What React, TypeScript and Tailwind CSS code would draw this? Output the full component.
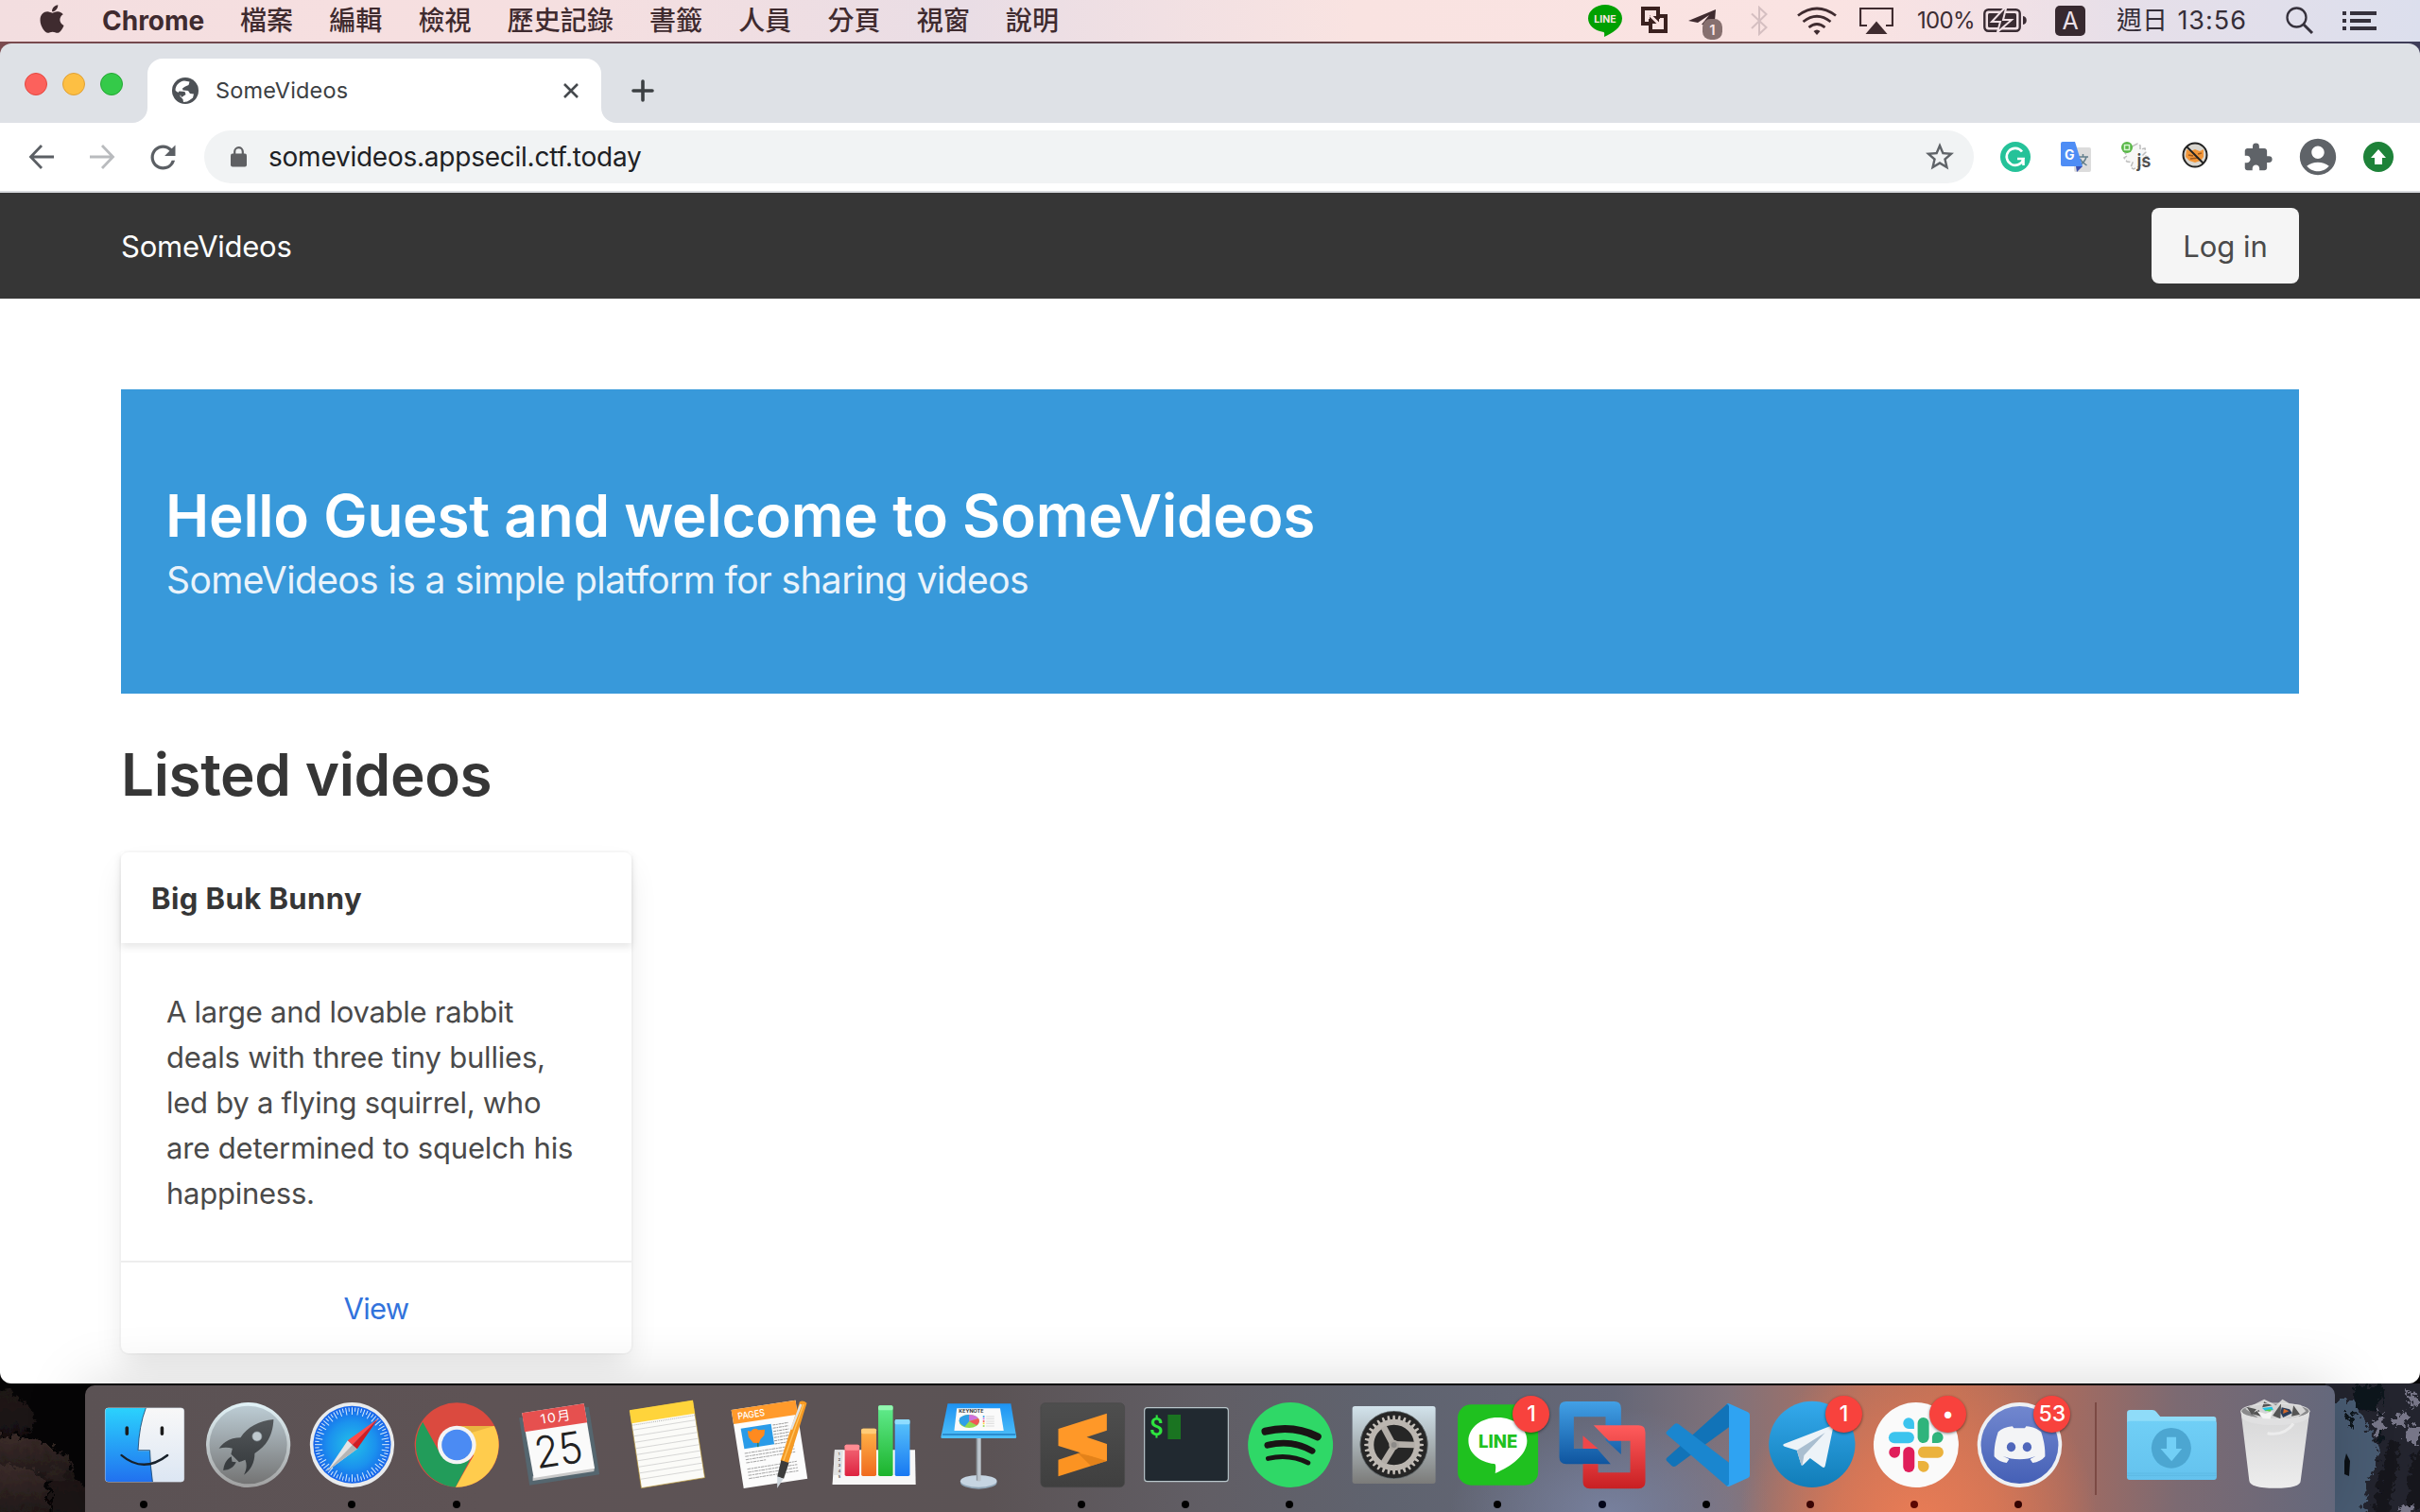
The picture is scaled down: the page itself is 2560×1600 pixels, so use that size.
import { type ReactNode } from "react";
import { FaApple } from "react-icons/fa";
import { MdStarBorder, MdExtension, MdAccountCircle, MdRefresh } from "react-icons/md";

const MENUS = ["檔案", "編輯", "檢視", "歷史記錄", "書籤", "人員", "分頁", "視窗", "說明"];

function MenuBar() {
  return (
    <header className="flex h-[44px] shrink-0 items-center bg-[linear-gradient(90deg,#f3dee0_0%,#f6dfe0_14%,#f5dfe0_24%,#e9dde5_40%,#f9e3e1_56%,#fae3e2_76%,#f3e1e5_82%,#e6dfe9_88%,#dcdfed_100%)] pl-[40px] text-[28px] leading-[44px] text-[#3f2b2f]">
      <FaApple className="h-[34px] w-[30px] -translate-y-[2px]" />
      <span className="ml-[38px] w-[108px] text-[28px] font-bold whitespace-nowrap">Chrome</span>
      <nav className="ml-[38px] flex gap-[38px] font-medium tracking-[0.1px]">
        {MENUS.map((m) => (
          <span key={m}>{m}</span>
        ))}
      </nav>
      <div className="ml-auto flex h-[44px] items-center text-[#3c2c32]">
        <svg width="36" height="36" viewBox="0 0 36 36" className="mr-[20px]">
          <path d="M18 1C8 1 0 7.500 0 15.500c0 7 6.500 13 15.500 14.200 1.800.3 1.900 1 1.500 5.300C25 31.500 36 25 36 15.500 36 7.500 28 1 18 1z" fill="#00a000" />
          <text x="18" y="20" textAnchor="middle" fontSize="10.500" fontWeight="700" fill="#fbe6e4" fontFamily="Inter">LINE</text>
        </svg>
        <svg width="28" height="30" viewBox="0 0 28 30" className="mr-[22px]" fill="none" stroke="#3a211f" strokeWidth="4">
          <path d="M18 13V2H2v16h8M18 10h8v16H10V13" />
          <path d="M7 7l14 14" stroke="#fae3e2" strokeWidth="4.500" />
          <path d="M9 9v9h9zM19 10v8l-8-8z" fill="#3a211f" stroke="none" />
          <path d="M10 9.500l9 9" stroke="#fae3e2" strokeWidth="3" />
        </svg>
        <svg width="36" height="34" viewBox="0 0 36 34" className="mr-[30px] translate-y-[4px]">
          <path d="M0 13L29 1l-1.500 18L14 17l8-10L10 15z" fill="#3f2b2f" />
          <rect x="15" y="11" width="21" height="22" rx="8.500" fill="#87706f" />
          <text x="25.300" y="27.500" textAnchor="middle" fontSize="15" fontWeight="600" fill="#fbe6e4" fontFamily="Inter">1</text>
        </svg>
        <svg width="18" height="32" viewBox="0 0 18 32" className="mr-[31px]" fill="none" stroke="#d5bfc1" strokeWidth="2">
          <path d="M1 8.500L16.500 23 9 30V2l7.500 7L1 24" />
        </svg>
        <svg width="42" height="30" viewBox="0 0 42 30" className="mr-[24px]" fill="none" stroke="#3f2b2f" strokeWidth="2.800">
          <path d="M1 9.500Q21-5.500 41 9.500M6.500 16q14.500-11.500 29 0M12.500 22q8.500-7 17 0" />
          <path d="M17.500 26q3.500-3 7 0L21 30z" fill="#3f2b2f" stroke="none" />
        </svg>
        <svg width="36" height="30" viewBox="0 0 36 30" className="mr-[25px]">
          <path d="M8 20H1V2h34v18h-7" fill="none" stroke="#3f2b2f" strokeWidth="2.200" />
          <path d="M18 15.500L29.500 29h-23z" fill="#3f2b2f" />
        </svg>
        <span className="w-[60px] text-[24px] font-normal whitespace-nowrap tracking-[-0.680px]">100%</span>
        <svg width="47" height="26" viewBox="0 0 47 26" className="ml-[10px]">
          <rect x="1.300" y="1.300" width="37.400" height="22.400" rx="4" fill="none" stroke="#3a2c33" strokeWidth="2.400" />
          <rect x="5" y="5" width="30" height="15" rx="1.500" fill="#3a2c33" />
          <path d="M42 8c5 0 5 9 0 9z" fill="#3a2c33" />
          <path d="M22 0L9 14h9l-3 11 15-13h-9l3-12z" fill="#3a2c33" stroke="#f0e0e5" strokeWidth="2" />
        </svg>
        <span className="ml-[29px] flex h-[32px] w-[32px] items-center justify-center rounded-[5px] bg-[#372930] text-[25px] text-[#ece0e8]">A</span>
        <span className="ml-[33px] flex w-[137px] justify-between whitespace-nowrap text-[27px] text-[#352e38]"><span>週日</span><span className="-mr-px tracking-[1px]">13:56</span></span>
        <svg width="30" height="30" viewBox="0 0 30 30" className="ml-[42px]" fill="none" stroke="#35313c" strokeWidth="2.300">
          <circle cx="11.500" cy="11.500" r="10" /><path d="M18.500 18.500L28 28" strokeWidth="3" />
        </svg>
        <svg width="36" height="20" viewBox="0 0 36 20" className="mr-[46px] ml-[30px]" fill="#35313c">
          <path d="M0 0h4v4H0zM8 0h28v4H8zM0 8h4v4H0zM8 8h22v4H8zM0 16h4v4H0zM8 16h28v4H8z" />
        </svg>
      </div>
    </header>
  );
}

function TabStrip() {
  return (
    <div className="flex h-[84px] items-end bg-[#dee1e6]">
      <div className="mb-[29px] ml-[26px] flex gap-[16px]">
        <i className="size-[24px] rounded-full border border-[#e5473f] bg-[#fc615c]" />
        <i className="size-[24px] rounded-full border border-[#dfa035] bg-[#fdbf43]" />
        <i className="size-[24px] rounded-full border border-[#25a834] bg-[#34ca49]" />
      </div>
      <svg width="16" height="16" className="ml-[10px]" viewBox="0 0 16 16"><path d="M16 0v16H0A16 16 0 0 0 16 0z" fill="#fff" /></svg>
      <div className="flex h-[68px] w-[480px] items-center rounded-t-[16px] bg-white pl-[26px]">
        <svg width="28" height="28" viewBox="0 0 28 28">
          <circle cx="14" cy="14" r="14" fill="#4d5156" />
          <path d="M3.500 13.500C3.500 8 8 4 13 3.500l5.500 1-1 3.500-3.500 1.500-3 2 .5 2 5.500.5 2 3 4 .5-1 4-3.500 2.500-2.500 1.500-4 .5-.5-3-3-3 .5-3-4-2z" fill="#fff" />
          <path d="M7.500 14.500l6 .5 1 3-4.500 3-1-2.500-3-1.500z" fill="#4d5156" />
        </svg>
        <span className="ml-[18px] text-[23.500px] tracking-[0.150px] whitespace-nowrap text-[#3c4043]">SomeVideos</span>
        <svg width="16" height="16" viewBox="0 0 16 16" className="mr-[24px] ml-auto" stroke="#45494d" strokeWidth="2.600"><path d="M1 1l14 14M15 1L1 15" /></svg>
      </div>
      <svg width="16" height="16" viewBox="0 0 16 16"><path d="M0 0v16h16A16 16 0 0 1 0 0z" fill="#fff" /></svg>
      <svg width="24" height="24" viewBox="0 0 24 24" className="mb-[22px] ml-[16px]" stroke="#3c4043" strokeWidth="3.600" strokeLinecap="round"><path d="M12 2v20M2 12h20" /></svg>
    </div>
  );
}

function Toolbar() {
  return (
    <div className="flex h-[74px] items-center border-b-2 border-[#d9dbde] bg-white">
      <svg width="28" height="28" viewBox="0 0 28 28" className="ml-[30px]" fill="none" stroke="#5b5f64" strokeWidth="2.800"><path d="M14 2L2.500 14 14 26M2.500 14H27" /></svg>
      <svg width="28" height="28" viewBox="0 0 28 28" className="ml-[36px]" fill="none" stroke="#b9bbbe" strokeWidth="2.800"><path d="M14 2l11.500 12L14 26M25.500 14H1" /></svg>
      <MdRefresh className="ml-[31px] size-[39px] text-[#5b5f64]" />
      <div className="ml-[24px] flex h-[56px] w-[1872px] items-center rounded-full bg-[#f1f3f4] pr-[18px] pl-[28px]">
        <svg width="17" height="22" viewBox="0 0 17 22"><path d="M4.200 9V5.500a4.300 4.300 0 0 1 8.600 0V9" fill="none" stroke="#5f6063" strokeWidth="2.200" /><rect y="7.500" width="17" height="14" rx="2" fill="#5f6063" /></svg>
        <span className="ml-[23px] text-[28px] tracking-[-0.240px] whitespace-nowrap text-[#202124]">somevideos.appsecil.ctf.today</span>
        <MdStarBorder className="ml-auto size-[36px] text-[#5f6368]" />
      </div>
      <svg width="32" height="32" viewBox="0 0 32 32" className="ml-[28px]">
        <circle cx="16" cy="16" r="16" fill="#25c299" />
        <path d="M23 10.500A9 9 0 1 0 24.500 18H18M24.500 17v8" fill="none" stroke="#fff" strokeWidth="2.600" />
      </svg>
      <svg width="32" height="32" viewBox="0 0 32 32" className="ml-[32px]">
        <rect x="14" y="6" width="18" height="26" rx="2" fill="#dcdcdc" />
        <path d="M18 16h11M23.500 13v3M27 16c-1 4-4 7-7 9M20.500 18c1 3 4 5 7 7" stroke="#607d8b" strokeWidth="1.500" fill="none" />
        <path d="M16 26h7l-6 6z" fill="#3a4fb0" />
        <path d="M2 0h13l8 26H2a2 2 0 0 1-2-2V2a2 2 0 0 1 2-2z" fill="#4e8df5" />
        <text x="4" y="18.500" fontSize="14" fontWeight="700" fill="#fff" fontFamily="Inter">G</text>
      </svg>
      <svg width="34" height="34" viewBox="0 -1 34 34" className="-mr-[2px] ml-[32px] overflow-visible">
        <path d="M13 4l4-2 3 2v4l5-1 1 4-3 3 5 2-1 3-8 7-6 3-3-2 2-5-6-1-3-4 3-2-3-5 5-1z" fill="#f7f7f7" stroke="#bdbdbd" strokeWidth="1.500" strokeDasharray="5 2" />
        <circle cx="6" cy="6" r="6" fill="#58b747" /><rect x="3.500" y="3.500" width="5" height="5" fill="none" stroke="#d9f5d4" strokeWidth="1.500" />
        <text x="16.500" y="27" fontSize="20" fontWeight="600" fill="#4d4d4d" fontFamily="Inter" textLength="15" lengthAdjust="spacingAndGlyphs">js</text>
      </svg>
      <svg width="28" height="28" viewBox="0 0 28 28" className="mb-[4px] ml-[32px]">
        <circle cx="14" cy="14" r="12.500" fill="#d9d6cf" />
        <path d="M5 8l4 2 5-2 5 2 4-2v8l-3 4-6 2-6-2-4-4z" fill="#f29638" /><path d="M7 14l5 1M17 13l4-1M9 18l9-1" stroke="#a1591d" strokeWidth="1.500" />
        <circle cx="14" cy="14" r="12.500" fill="none" stroke="#222" strokeWidth="2" /><path d="M5 5l18 18" stroke="#222" strokeWidth="2" />
      </svg>
      <MdExtension className="ml-[36px] size-[33px] text-[#5f6368]" />
      <MdAccountCircle className="ml-[24px] size-[46px] text-[#5f6368]" />
      <svg width="32" height="32" viewBox="0 0 32 32" className="ml-[25px]"><circle cx="16" cy="16" r="16" fill="#1e8239" /><path d="M16 8l8 9h-4v7h-8v-7H8z" fill="#fff" /></svg>
    </div>
  );
}

function Page() {
  return (
    <main className="flex-1 bg-white">
      <div className="flex h-[112px] items-center justify-between bg-[#363636] px-[128px]">
        <span className="pt-[2px] text-[31px] tracking-[-0.250px] whitespace-nowrap text-white">SomeVideos</span>
        <button className="h-[80px] w-[156px] rounded-[8px] bg-[#f5f5f5] pt-[2px] text-[31px] whitespace-nowrap text-[#4a4a4a]">Log in</button>
      </div>
      <div className="px-[128px] pt-[96px]">
        <section className="h-[322px] bg-[#3899da] px-[48px] pt-[98px]">
          <h1 className="-ml-px text-[62px] leading-[72px] font-semibold tracking-[-0.250px] whitespace-nowrap text-white">Hello Guest and welcome to SomeVideos</h1>
          <p className="text-[39px] leading-[64px] tracking-[-0.620px] whitespace-nowrap text-[#e9f3fb]">SomeVideos is a simple platform for sharing videos</p>
        </section>
        <h2 className="mt-[48px] h-[72px] text-[62px] leading-[76px] font-semibold tracking-[-0.400px] whitespace-nowrap text-[#363636]">Listed videos</h2>
        <article className="mt-[48px] w-[540px] rounded-[8px] bg-white text-[31px] leading-[48px] text-[#4a4a4a] shadow-[0_16px_32px_-4px_rgba(10,10,10,0.1),0_0_0_2px_rgba(10,10,10,0.02)]">
          <h3 className="h-[96px] px-[32px] pt-[25px] font-bold tracking-[0.430px] text-[#363636] shadow-[0_4px_8px_rgba(10,10,10,0.1)]">Big Buk Bunny</h3>
          <div className="h-[336px] px-[48px] pt-[49px] tracking-[-0.200px] whitespace-nowrap">
            <span className="tracking-[-0.250px]">A large and lovable rabbit</span><br />
            deals with three tiny bullies,<br />
            <span className="tracking-[-0.270px]">led by a flying squirrel, who</span><br />
            <span className="tracking-[-0.150px]">are determined to squelch his</span><br />
            <span className="tracking-[-0.250px]">happiness.</span>
          </div>
          <div className="flex h-[98px] items-center justify-center border-t-2 border-[#ededed] pt-[2px] text-[#3273dc]"><span className="tracking-[-0.700px]">View</span></div>
        </article>
      </div>
    </main>
  );
}

function DockIcon({ vb, dot, badge, children }: { vb: string; dot?: string; badge?: string; children: ReactNode }) {
  return (
    <div className="relative h-[134px] w-[110.200px] shrink-0">
      <svg width="110.200" height="134" viewBox={vb} preserveAspectRatio="none" className="overflow-visible">{children}</svg>
      {dot && <i className={`absolute top-[122px] left-[50px] size-[8px] rounded-full ${dot}`} />}
      {badge && (
        <span className="absolute top-[11px] left-[70px] flex size-[39px] items-center justify-center rounded-full bg-[#f8423d] text-[23px] font-medium text-white shadow-[0_1px_3px_rgba(0,0,0,0.5)]">{badge}</span>
      )}
    </div>
  );
}

function Grad({ id, from, to }: { id: string; from: string; to: string }) {
  return <linearGradient id={id} x1="0" y1="0" x2="0" y2="1"><stop offset="0" stopColor={from} /><stop offset="1" stopColor={to} /></linearGradient>;
}

const TICKS = Array.from({ length: 72 }, (_, i) => i * 5);
const TEETH = Array.from({ length: 32 }, (_, i) => i * 11.25);
const RULES = Array.from({ length: 11 }, (_, i) => i);

function Dock() {
  return (
    <div className="ml-[90px] flex h-[134px] w-[2380px] rounded-t-[10px] bg-[radial-gradient(ellipse_190px_190px_at_1939px_150px,#ea7c55_0%,rgba(222,120,85,0.800)_45%,rgba(190,115,95,0)_100%),radial-gradient(ellipse_170px_110px_at_1614px_134px,#77809d_0%,rgba(119,128,157,0)_100%),linear-gradient(90deg,#5b5254_0%,#5e5355_18%,#5b5355_40%,#615e65_50%,#5f636f_58%,#656777_68%,#80727a_73%,#b06f5e_79%,#bd7056_83%,#a56b60_88%,#7c6a72_93%,#64687c_100%)] pl-[8px] shadow-[0_0_64px_rgba(0,0,0,0.170)]">
      <DockIcon vb="274.4 78 308.600 402" dot="bg-black">
        <defs><Grad id="fi" from="#2bd2fd" to="#2171ef" /><Grad id="fw" from="#f8f8f8" to="#dce6f3" /></defs>
        <rect x="312" y="150" width="233" height="234" rx="9" fill="url(#fw)" stroke="#dfe9f3" strokeWidth="2" />
        <path d="M432 150H321q-9 0-9 9v216q0 9 9 9h131q-6-50-8-98h-35q3-80 23-136z" fill="url(#fi)" />
        <path d="M432 150q-20 56-23 134h35q1 50 8 100" fill="none" stroke="#1c4a72" strokeWidth="2.500" />
        <path d="M376 213v19M480 213v19" stroke="#1b1b1b" strokeWidth="10" strokeLinecap="round" />
        <path d="M360 300q65 59 136 0" fill="none" stroke="#17212b" strokeWidth="7" strokeLinecap="round" />
      </DockIcon>
      <DockIcon vb="583 78 308.600 402">
        <defs><Grad id="lr" from="#e2f3f8" to="#a0a0a0" /><Grad id="lb" from="#bcccd4" to="#747474" /><Grad id="lk" from="#54585b" to="#33373a" /></defs>
        <ellipse cx="736" cy="267" rx="125" ry="135" fill="url(#lr)" /><ellipse cx="736" cy="267" rx="115" ry="124" fill="url(#lb)" />
        <path d="M811 186c-42 4-78 24-98 58-24 0-48 10-64 34 14-4 28-4 40 0l-4 18 24 26 18-8c6 16 4 32-4 48 20-14 32-38 32-68 38-26 54-60 56-108z" fill="url(#lk)" />
        <path d="M686 304c-16 10-22 26-24 44 18-2 30-8 38-26l-12-2z" fill="#383c3f" />
        <ellipse cx="762" cy="240" rx="14" ry="15" fill="#bfc9ce" stroke="#8b959b" strokeWidth="2" />
      </DockIcon>
      <DockIcon vb="891.5 78 308.600 402" dot="bg-black">
        <defs><radialGradient id="sf"><stop offset="0" stopColor="#22c1e8" /><stop offset="0.600" stopColor="#1b92ee" /><stop offset="1" stopColor="#1763ea" /></radialGradient></defs>
        <ellipse cx="1044" cy="267" rx="125" ry="135" fill="#e9ebec" /><ellipse cx="1044" cy="266" rx="115" ry="123" fill="url(#sf)" />
        <g transform="translate(1044 266) scale(0.935 1)" stroke="#d8ecfb" strokeWidth="3">
          {TICKS.map((a) => <path key={a} d={a % 10 ? "M0-118V-105" : "M0-118V-95"} transform={`rotate(${a})`} />)}
        </g>
        <path d="M970 350L1031 253l28 27z" fill="#e4e4e4" /><path d="M970 350l75-83 14 13z" fill="#b5b5b5" />
        <path d="M1121 184l-90 69 14 14z" fill="#ff4a4a" /><path d="M1121 184l-76 83 14 13z" fill="#d31c22" />
      </DockIcon>
      <DockIcon vb="1200 78 308.600 402" dot="bg-black">
        <ellipse cx="1352" cy="267" rx="125" ry="134" fill="#db4a3f" />
        <path d="M1352 207H1463A125 134 0 0 1 1348 401L1402 300z" fill="#ffcc4d" />
        <path d="M1251 194A125 134 0 0 0 1348 401L1390 316 1300 290z" fill="#229c5a" />
        <path d="M1352 207h111l-70 22z" fill="#d9a53b" opacity="0.600" />
        <ellipse cx="1352" cy="267" rx="57" ry="61" fill="#f4f4f4" /><ellipse cx="1352" cy="267" rx="45" ry="49" fill="#4b8bf3" />
      </DockIcon>
      <DockIcon vb="-3.5 78 320 402">
        <path d="M26 181l214-35 33 215L58 395z" fill="#55666f" /><path d="M68 381l188-30 2-14-190 30z" fill="#c9c9c9" />
        <path d="M35 166l190-30 33 205-187 31z" fill="#fafafa" /><path d="M35 166l190-30 10 60-192 30z" fill="#e6504f" />
        <g transform="rotate(-9 140 190)" fontFamily="Inter, Noto Sans CJK TC" textAnchor="middle">
          <text x="139" y="193" fontSize="41" fill="#fff" textLength="93">10月</text>
          <text x="132" y="332" fontSize="138" fontWeight="300" fill="#222" textLength="148" lengthAdjust="spacingAndGlyphs">25</text>
        </g>
      </DockIcon>
      <DockIcon vb="316.5 78 320 402">
        <path d="M366 158l194-32 37 245-195 33z" fill="#fbfbf8" stroke="#b08f2c" strokeWidth="2" />
        <path d="M366 157l194-32 6 42-194 32z" fill="#ffd43b" />
        <path d="M373 205l193-32" stroke="#888" strokeWidth="2" strokeDasharray="3 3" />
        {RULES.slice(0, 9).map((i) => <path key={i} d={`M${375 + i * 3} ${220 + i * 19.5}l193-32`} stroke="#bfbfbf" strokeWidth="1.800" />)}
      </DockIcon>
      <DockIcon vb="636.5 78 320 402">
        <path d="M679 156l197-31 37 249-196 31z" fill="#fcfcfc" /><path d="M679 156l197-31 7 45-197 31z" fill="#ff9a2b" />
        <text transform="rotate(-9 700 186)" x="700" y="187" fontSize="30" fontWeight="500" fill="#fff" fontFamily="Inter" textLength="84" lengthAdjust="spacingAndGlyphs">PAGES</text>
        <path d="M708 215l93-15 10 65-92 15z" fill="#2a9be8" />
        <path d="M729 222l10 2 5-6q12-6 18 2l20-2-2 18-12 14-4 12-18-2-14-18z" fill="#ff8a1f" /><path d="M761 260v14" stroke="#2b6e2f" strokeWidth="3" />
        {RULES.slice(0, 7).map((i) => <path key={i} d={`M${806 + i} ${204 + i * 10}l48-8`} stroke="#9a9a9a" strokeWidth="3" strokeDasharray="9 2 5 2" />)}
        {[0, 1, 2, 3, 5, 6, 7, 8].map((i) => <path key={i} d={`M${720 + i * 1.6} ${294 + i * 10}l${i === 3 ? 62 : 152} ${i === 3 ? -10 : -25}`} stroke="#a5a5a5" strokeWidth="3" strokeDasharray="11 2 6 2" />)}
        <path d="M889 130q10-6 22 4l-57 190-24-6z" fill="#f59a23" /><path d="M893 138l-30 80" stroke="#dfe3e6" strokeWidth="7" /><path d="M901 138l-62 180" stroke="#ffc45f" strokeWidth="4" />
        <path d="M832 316l24 8-16 50-20-6z" fill="#3c3c3c" /><path d="M820 367l19 7-19 30z" fill="#ced6dc" />
      </DockIcon>
      <DockIcon vb="956.5 78 320 402">
        <defs><Grad id="n1" from="#f46a78" to="#dd2340" /><Grad id="n2" from="#ffb64a" to="#f06a1e" /><Grad id="n3" from="#62ec8e" to="#1cb32c" /><Grad id="n4" from="#5ac6fb" to="#1878f2" /></defs>
        <path d="M997 283h247l2 110H990z" fill="#f7f7f7" /><path d="M997 283h26l-5 80h-24z" fill="#e2e2e2" />
        {[1, 2, 3, 4, 5].map((n) => <text key={n} x={1008} y={281 + n * 18.500} fontSize="11" fontWeight="700" fill="#555" fontFamily="Inter">{n}</text>)}
        <rect x="1028" y="266" width="45" height="100" rx="5" fill="url(#n1)" /><rect x="1028" y="266" width="45" height="18" rx="5" fill="#ff8c93" />
        <rect x="1079" y="215" width="46" height="151" rx="5" fill="url(#n2)" /><rect x="1079" y="215" width="46" height="17" rx="5" fill="#ffcc77" />
        <rect x="1131" y="142" width="45" height="224" rx="5" fill="url(#n3)" /><rect x="1131" y="142" width="45" height="15" rx="5" fill="#93f7b0" />
        <rect x="1182" y="186" width="46" height="180" rx="5" fill="url(#n4)" /><rect x="1182" y="186" width="46" height="16" rx="5" fill="#8edcff" />
      </DockIcon>
      <DockIcon vb="1276.5 78 320 402">
        <defs><Grad id="ky" from="#1d93f3" to="#4fc0f8" /></defs>
        <ellipse cx="1437" cy="386" rx="56" ry="21" fill="#8ea4b6" /><ellipse cx="1437" cy="382" rx="56" ry="19" fill="#c6d5e2" />
        <path d="M1430 246h14v134q-7 5-14 0z" fill="#bcc5cd" /><path d="M1430 246h4v134h-4z" fill="#8d969e" />
        <path d="M1342 136h194l17 106q0 4-4 4h-224q-4 0-4-4z" fill="url(#ky)" /><path d="M1326 234h224" stroke="#0c5fa8" strokeWidth="3" />
        <path d="M1370 151h133l11 71h-152z" fill="#fafafa" />
        <text x="1376" y="164" fontSize="13" fontWeight="700" fill="#333" textLength="76" lengthAdjust="spacingAndGlyphs" fontFamily="Inter">KEYNOTE</text>
        <ellipse cx="1408" cy="192" rx="31" ry="21" fill="#93d94f" /><path d="M1408 192l-14 17q-24-12-14-28 10-10 28-10z" fill="#2f9fe8" /><path d="M1408 192v-21q20 0 28 12z" fill="#d070dd" /><path d="M1408 192l29-9q6 12-6 22z" fill="#f25555" />
        <path d="M1450 177h5" stroke="#2f9fe8" strokeWidth="5" /><path d="M1450 184h5" stroke="#d070dd" strokeWidth="5" /><path d="M1450 192h5" stroke="#f25555" strokeWidth="5" /><path d="M1450 199h5" stroke="#ffd43b" strokeWidth="5" /><path d="M1450 207h5" stroke="#93d94f" strokeWidth="5" />
        <path d="M1460 177h25M1460 184h25M1460 192h25M1460 199h25M1460 207h25" stroke="#ccc" strokeWidth="2" />
      </DockIcon>
      <DockIcon vb="89.4 78 330.600 402" dot="bg-black">
        <defs><Grad id="su" from="#4e4e4e" to="#3f3f3f" /></defs>
        <rect x="122" y="134" width="266" height="267" rx="14" fill="url(#su)" stroke="#484848" strokeWidth="2" />
        <path d="M178 314l154-50v54l-154 49z" fill="#fb9322" /><path d="M240 293l92 20v5l-50 16z" fill="#d97a17" opacity="0.700" />
        <path d="M332 167v54l-64 21 64 22v54l-154-48v-54z" fill="#ff9828" />
      </DockIcon>
      <DockIcon vb="420 78 330.600 402" dot="bg-black">
        <rect x="452" y="149" width="266" height="234" rx="9" fill="#212930" stroke="#b9c6cb" strokeWidth="3.500" />
        <text x="468" y="237" fontSize="76" fontWeight="500" fill="#2ee53f" fontFamily="Roboto, Inter" textLength="44" lengthAdjust="spacingAndGlyphs">$</text>
        <rect x="526" y="171" width="41" height="78" fill="#1a7421" />
      </DockIcon>
      <DockIcon vb="750.6 78 330.600 402" dot="bg-black">
        <circle cx="916" cy="267" r="135" fill="#2fd867" />
        <g fill="none" stroke="#191414" strokeLinecap="round"><path d="M836 224q88-22 166 17" strokeWidth="24" /><path d="M843 268q76-20 142 18" strokeWidth="20" /><path d="M845 310q68-16 127 14" strokeWidth="15" /></g>
      </DockIcon>
      <DockIcon vb="1081.2 78 330.600 402">
        <defs><Grad id="se" from="#d2e3ec" to="#7b7b79" /></defs>
        <rect x="1113" y="144" width="264" height="246" rx="8" fill="url(#se)" /><circle cx="1245" cy="267" r="108" fill="#262626" /><circle cx="1245" cy="267" r="107" fill="none" stroke="#9aa8b0" strokeWidth="2" opacity="0.700" />
        <g transform="translate(1245 267)" fill="#c6c1bb">
          {TEETH.map((a) => <path key={a} d="M-4.500-80L-3-94H3L4.500-80z" transform={`rotate(${a})`} />)}
          <circle r="73" fill="none" stroke="#bbb6b0" strokeWidth="18" />
          {[0, 120, 240].map((a) => <path key={a} d="M-8-12H0L66-10V10L0 8z" transform={`rotate(${a})`} fill="#b3aea8" />)}
          <circle r="16" fill="#aaa59f" /><circle r="9" fill="#8c8a88" />
        </g>
      </DockIcon>
      <DockIcon vb="-28.2 78 330.600 402" dot="bg-black" badge="1">
        <rect x="8" y="139" width="255" height="256" rx="42" fill="#1fc11f" />
        <path d="M135 180c-52 0-93 32-93 74 0 38 34 68 82 73 6 1 5 12 3 30 50-22 101-58 101-103 0-42-41-74-93-74z" fill="#fff" />
        <text x="74" y="277" fontSize="56" fontWeight="800" fill="#1fc11f" textLength="124" lengthAdjust="spacingAndGlyphs" fontFamily="Inter">LINE</text>
      </DockIcon>
      <DockIcon vb="302.4 78 330.600 402" dot="bg-[#03061a]">
        <defs><Grad id="vb" from="#42a0e6" to="#0f559f" /><Grad id="vr" from="#ff5c5c" to="#c81f22" /></defs>
        <path d="M350 129h152q22 0 22 22v146L475 252v-74H374v101h74l43 49H350q-22 0-22-22V151q0-22 22-22z" fill="url(#vb)" />
        <path d="M437 205h142q22 0 22 22v157q0 22-22 22H425q-22 0-22-22v-56h48v27h102V254h-68z" fill="url(#vr)" />
        <path d="M403 238l48 41h-48z" fill="#f0474a" />
      </DockIcon>
      <DockIcon vb="633 78 330.600 402" dot="bg-black">
        <path d="M669 309l192-172q4-3 8 0v72L700 333q-8 6-15 0l-16-16q-3-4 0-8z" fill="#1173b8" />
        <path d="M669 225l25-24q6-5 13 0l160 122v74q-4 3-8 0L669 233q-3-4 0-8z" fill="#1a86cf" />
        <path d="M867 136l60 27q6 3 6 9v192q0 5-6 8l-60 27q-5 1-8-1 8-1 8-8V145q0-7-8-8 3-2 8-1z" fill="#2fa3f2" />
      </DockIcon>
      <DockIcon vb="963.6 78 330.600 402" dot="bg-[#3a0505]" badge="1">
        <defs><Grad id="tg" from="#34a9ec" to="#117db8" /></defs>
        <circle cx="1131" cy="265" r="137" fill="url(#tg)" />
        <path d="M1042 264l148-57q9-2 8 6l-25 120q-2 9-10 4l-38-28-22 22q-6 3-7-4l-13-43-39-12q-8-4-2-8z" fill="#edf3f8" />
        <path d="M1083 284l90-56-67 72-6 32q-3 1-4-4z" fill="#a9bed0" />
      </DockIcon>
      <DockIcon vb="1294.2 78 330.600 402" dot="bg-[#5a0703]" badge="•">
        <circle cx="1462" cy="267" r="135" fill="#fafafa" />
        <g transform="translate(1462 267)">
          {[["#3cc4ee", 0], ["#2fb47c", 90], ["#ebb23c", 180], ["#e01e5a", 270]].map(([c, r]) => (
            <g key={c} transform={`rotate(${r})`} fill={String(c)}><rect x="-87" y="-41" width="81" height="36" rx="18" /><path d="M-6-51v-18a17.500 17.500 0 1 0-17.500 18z" /></g>
          ))}
        </g>
      </DockIcon>
      <DockIcon vb="178.9 78 320 402" dot="bg-[#330302]" badge="53">
        <defs><Grad id="di" from="#7187cf" to="#4560b6" /></defs>
        <ellipse cx="340" cy="267" rx="130" ry="135" fill="#eef0f3" /><ellipse cx="340" cy="267" rx="119" ry="123" fill="url(#di)" />
        <path d="M318 208c-20 2-34 8-44 18-8 24-13 50-12 78 10 12 24 19 38 20l8-12-20-10c32 14 72 14 102 0l-18 10 8 12c16-2 28-8 38-20 1-28-4-54-12-78-12-10-24-16-46-18l-4 6h-34z" fill="#f3f4f6" />
        <ellipse cx="314" cy="274" rx="13.500" ry="15" fill="#5067bb" /><ellipse cx="363" cy="274" rx="13.500" ry="15" fill="#5067bb" />
      </DockIcon>
      <i className="mt-[18px] ml-[24px] h-[98px] w-[2px] bg-[#7c4a44]" />
      <div className="w-[24px]" />
      <DockIcon vb="644.6 78 320 402">
        <defs><Grad id="fo" from="#70cff6" to="#64c2ee" /></defs>
        <path d="M678 156h68q8 0 12 6l12 15h164q8 0 8 8v185H668V166q0-10 10-10z" fill="#8fdcf9" />
        <path d="M668 198q0-7 8-7h259q8 0 8 7v172q0 8-8 8H676q-8 0-8-8z" fill="url(#fo)" /><path d="M668 357h275M668 364h275" stroke="#55aed9" strokeWidth="1.500" />
        <ellipse cx="804" cy="277" rx="61" ry="64" fill="#4ca6d1" /><path d="M790 242h29v37h18l-32 40-34-40h19z" fill="#72cff6" />
      </DockIcon>
      <DockIcon vb="964.6 78 320 402">
        <defs><Grad id="tr" from="#d6d6d7" to="#ededed" /></defs>
        <path d="M1018 158l26 222q2 24 80 24t78-24l28-222z" fill="url(#tr)" />
        <ellipse cx="1124" cy="160" rx="106" ry="25" fill="#8a8a8c" />
        <path d="M1032 152l28-14 30-16 24 12 12 8 20-20 22 14 34 4 16 20-24 18-60 8-60-4z" fill="#d4d4d4" />
        <path d="M1036 146l30 8-14 18zM1090 130l24 12-30 6zM1180 142l20 28-26 6zM1116 174l26-38-2 48zM1050 168l24-12 6 20z" fill="#555" /><path d="M1084 150l30-4 4 10-24 4z" fill="#22c3e6" /><path d="M1090 157l24-4-6 8z" fill="#5bd04a" /><path d="M1144 148l24 6 8 12-28 14-8-16z" fill="#2b3d59" /><path d="M1150 152l16 8-18 8z" fill="#d2692c" /><path d="M1068 160l26 8 22-8-8 26-22-2z" fill="#f4f4f4" />
        <path d="M1018 158q10 22 60 26 46 4 92 0 50-6 60-26l-4 24q-30 22-104 22t-100-22z" fill="#e0e0e1" />
        <ellipse cx="1124" cy="160" rx="105" ry="25" fill="none" stroke="#e8e8e8" strokeWidth="2.500" />
        <path d="M1100 230q50 10 80-30" stroke="#f6f6f6" strokeWidth="9" fill="none" opacity="0.600" />
      </DockIcon>
    </div>
  );
}

function Wallpaper() {
  return (
    <div className="absolute inset-0 flex flex-col justify-end bg-[linear-gradient(90deg,#7a4a4e_0%,#4f3d4a_40%,#7a4d4a_65%,#3d3c58_100%)]">
      <svg width="2560" height="150" viewBox="0 1450 2560 150">
        <defs>
          <filter id="rough" x="-10%" y="-10%" width="120%" height="120%"><feTurbulence baseFrequency="0.090" numOctaves="3" seed="4" /><feDisplacementMap in="SourceGraphic" scale="16" xChannelSelector="R" yChannelSelector="G" /></filter>
          <Grad id="ra" from="#33272580" to="#140f10" /><Grad id="rb" from="#3a2b29" to="#1b1515" />
        </defs>
        <rect y="1450" width="2560" height="150" fill="#060506" />
        <g filter="url(#rough)">
          <path d="M-10 1466q30 4 44 34l-12 14-32 4z" fill="url(#ra)" />
          <path d="M-10 1518q46-6 76 20 12 14 2 22l-30 6-48-20z" fill="url(#rb)" />
          <path d="M-10 1548q34-4 52 10 8 20 6 50H-10z" fill="url(#rb)" />
          <path d="M52 1548l24 10 20 22v30H50z" fill="url(#ra)" />
        </g>
        <rect x="2460" y="1464" width="100" height="136" fill="#23242e" />
        <g filter="url(#rough)">
          <path d="M2450 1480h38l14 30 12 26-16 30 2 40h-50z" fill="#4a5c73" />
          <path d="M2484 1464h34l-6 30-24-8zM2476 1490l12 6-4 14zM2514 1500l6 16-10 12z" fill="#11141d" />
          <path d="M2506 1500l10-8 4 14-10 12zM2530 1494l12-6 2 12-14 10zM2544 1506l12-2v22l-14-4zM2540 1470l14 4v14zM2530 1590l18 2-4 8z" fill="#777688" />
          <path d="M2522 1520l14 10-14 70h-14zM2548 1540l14-8v60h-20z" fill="#14141b" />
        </g>
        <path d="M2482 1538l4 8-1 16-5-2v-14z" fill="#0c1016" />
      </svg>
    </div>
  );
}

export default function App() {
  return (
    <div lang="zh-Hant" className="relative h-[1600px] w-[2560px] overflow-hidden font-['Inter','Noto_Sans_CJK_TC',sans-serif]">
      <Wallpaper />
      <div className="relative flex h-full flex-col">
        <MenuBar />
        <div className="mt-[2px] mb-[2px] flex h-[1418px] shrink-0 flex-col overflow-hidden rounded-[12px]">
          <TabStrip />
          <Toolbar />
          <Page />
        </div>
        <Dock />
      </div>
    </div>
  );
}
